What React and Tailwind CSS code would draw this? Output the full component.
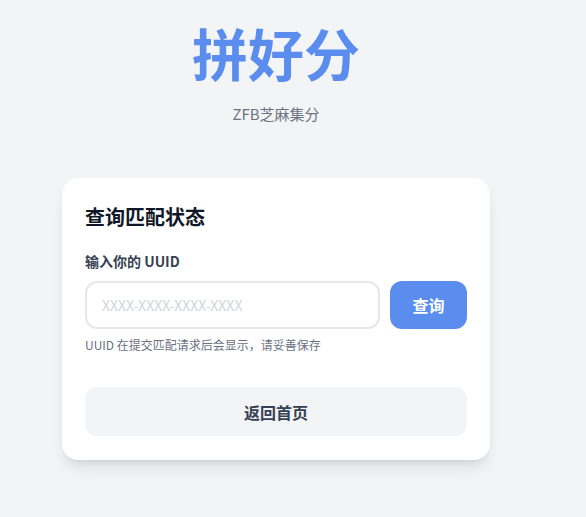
import { useState } from 'react'

function App() {
  const [uuid, setUuid] = useState('')

  return (
    <div className="min-h-[517px] bg-[#f3f4f6] font-['Noto_Sans_CJK_SC',sans-serif]">
      <div className="w-[552px] flex flex-col items-center pt-[24px]">
        <h1 className="text-[56px] leading-none font-bold text-[#5b8def]">拼好分</h1>
        <p className="mt-[22px] text-[15px] leading-6 text-gray-500">ZFB芝麻集分</p>

        <div className="mt-[52px] w-[428px] bg-white rounded-2xl shadow-lg px-[23px] py-6">
          <h2 className="mt-px text-xl leading-7 font-bold text-gray-900">查询匹配状态</h2>

          <label className="block mt-5 mb-[10px] text-sm leading-5 font-semibold text-gray-700">输入你的 UUID</label>
          <div className="flex gap-[10px]">
            <input
              value={uuid}
              onChange={e => setUuid(e.target.value)}
              placeholder="XXXX-XXXX-XXXX-XXXX"
              className="flex-1 min-w-0 h-12 px-[15px] rounded-xl border-2 border-gray-200 text-sm text-gray-800 placeholder:text-gray-300 outline-none"
            />
            <button className="w-[77px] h-12 rounded-xl bg-[#5b8def] text-white text-base font-bold">查询</button>
          </div>
          <p className="mt-2 text-xs leading-4 text-gray-500">UUID 在提交匹配请求后会显示，请妥善保存</p>

          <button className="mt-[34px] w-full h-[49px] rounded-xl bg-gray-100 text-base font-bold text-gray-700">返回首页</button>
        </div>
      </div>
    </div>
  )
}

export default App
